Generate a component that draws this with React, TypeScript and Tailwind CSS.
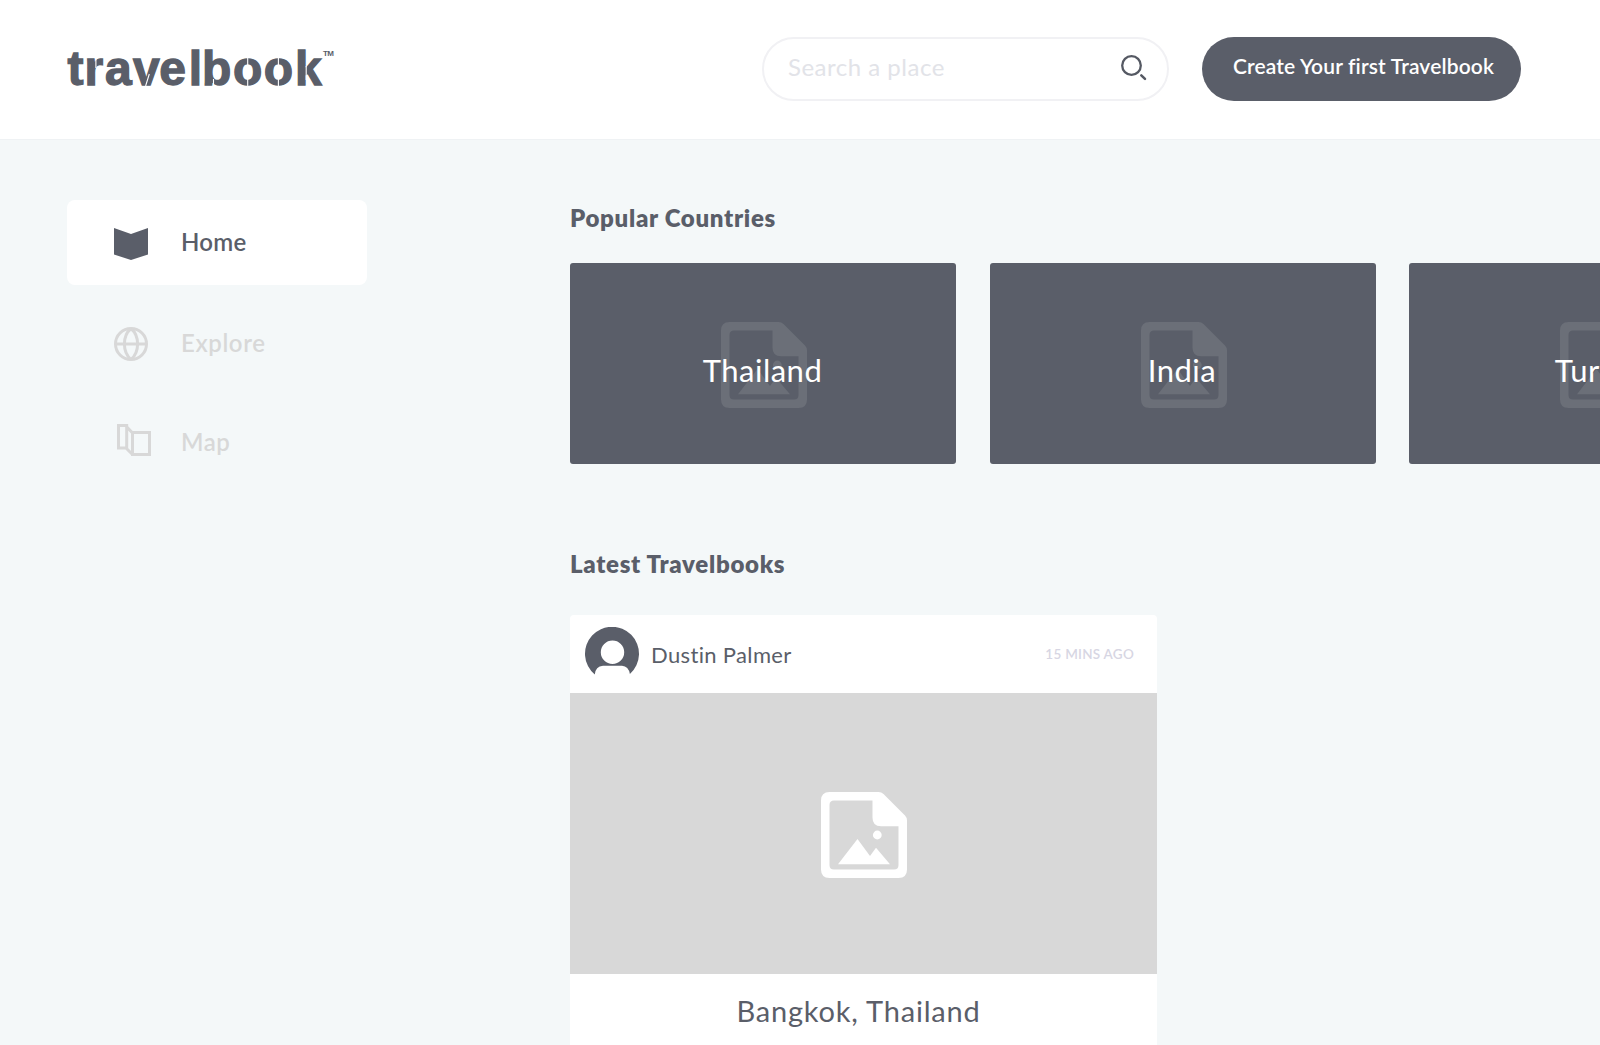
import type { ReactNode } from "react";

function Logo() {
  return (
    <svg width="280" height="44" viewBox="0 0 280 44" className="block overflow-visible" aria-label="travelbook">
      <g fill="#5a5e69" fontFamily="Liberation Sans" fontWeight="700">
        <text x="0.5 17.5 38 66 92.300 121.800 135 166 196.700 228" y="39" fontSize="48" stroke="#5a5e69" strokeWidth="1.300">
          travelbook
        </text>
        <text x="256" y="10" fontSize="8" textLength="11">TM</text>
      </g>
      <g stroke="#fff" strokeWidth="1.100" fill="none">
        <path d="M180.700 9v11.500M180.700 33v9M211.400 9v11.500M211.400 33v9M146.500 33v9M28.900 11v11M78.600 40l3.700-12M239.200 20v14" />
      </g>
    </svg>
  );
}

function SearchIcon() {
  return (
    <svg width="28" height="28" viewBox="0 0 28 28" fill="none" stroke="#555963" className="mb-[2px]">
      <circle cx="11.500" cy="11.500" r="9.300" strokeWidth="2.300" />
      <path d="m21.300 21.300 3.700 3.600" strokeWidth="2.500" strokeLinecap="round" />
    </svg>
  );
}

function ImageIcon({ className }: { className: string }) {
  return (
    <svg width="86" height="86" viewBox="0 0 86 86" fill="currentColor" className={className}>
      <path
        fillRule="evenodd"
        d="M8 0H57.500Q60.500 0 62.500 2L84 23.500Q86 25.500 86 28.500V77.500Q86 86 77.500 86H8.500Q0 86 0 77.500V8.500Q0 0 8.500 0ZM13 8.500Q8.500 8.500 8.500 13V73Q8.500 77.500 13 77.500H73Q77.500 77.500 77.500 73V34.300H60Q51.500 34.300 51.500 25.800V8.500Z"
      />
      <circle cx="56.300" cy="43" r="4.400" />
      <path d="M17 72.300 36.500 47 49 64l6-8.200L69 72.300Z" />
    </svg>
  );
}

function BookIcon() {
  return (
    <svg width="34" height="34" viewBox="0 0 34 34">
      <path d="M0 2 17 8 34 2v26.500L17 34 0 28.500Z" fill="#5a5e69" />
    </svg>
  );
}

function GlobeIcon() {
  return (
    <svg width="34" height="34" viewBox="0 0 34 34" fill="none" stroke="#d8d8d8" strokeWidth="3">
      <circle cx="17" cy="17" r="15.500" />
      <path d="M1.500 17h31M17 1.500C8.200 9 8.200 25 17 32.500M17 1.500C25.800 9 25.800 25 17 32.500" />
    </svg>
  );
}

function MapIcon() {
  return (
    <svg width="34" height="32" viewBox="0 0 34 32" fill="none" stroke="#d8d8d8" strokeWidth="3">
      <path d="M15.500 8.500h17v22h-17zM1.500 1.500h8.200v22.500H1.500zM8.500 1.500l7 7.500M8.500 23.500l7 7" />
    </svg>
  );
}

function Avatar() {
  return (
    <svg width="54" height="54" viewBox="0 0 54 54">
      <path
        fillRule="evenodd"
        fill="#5a5e69"
        d="M9.800 47.600A27 27 0 1 1 44.900 47Q43.500 39 37 38.700H18Q10.500 39 9.800 47.600ZM27.500 13.500a11.700 11.700 0 1 0 0 23.400 11.700 11.700 0 0 0 0-23.400Z"
      />
    </svg>
  );
}

function NavItem({ icon, active, className, children }: { icon: ReactNode; active?: boolean; className: string; children: ReactNode }) {
  return (
    <a className={`flex w-[300px] items-center rounded-lg pl-[47px] text-2xl font-semibold ${active ? "bg-white text-[#5a5e69]" : "text-[#d8d8d8]"} ${className}`}>
      <span className="flex w-[67px] shrink-0">{icon}</span>
      <span className="mb-[2px]">{children}</span>
    </a>
  );
}

function Country({ children }: { children: ReactNode }) {
  return (
    <div className="relative flex h-[201px] w-[386px] shrink-0 items-center justify-center rounded-[3px] bg-[#5a5e69]">
      <ImageIcon className="absolute top-[59px] left-[151px] text-[#6b6f78]" />
      <span className="relative mt-[12px] mr-[1px] text-[31px] leading-[38px] tracking-[0.5px] text-white">{children}</span>
    </div>
  );
}

export default function App() {
  return (
    <div className="flex h-[1045px] w-full flex-col overflow-hidden bg-[#f4f8f9] text-[#5a5e69] [font-family:Lato,sans-serif]">
      <header className="flex h-[140px] shrink-0 items-start border-b border-[#eff2f4] bg-white pt-[37px] pl-[67px]">
        <div className="mt-[9px] w-[695px]">
          <Logo />
        </div>
        <div className="flex h-[64px] w-[407px] items-center justify-between rounded-full border-2 border-[#f1f1f4] pr-[19px] pl-[24px]">
          <span className="mb-[4px] text-2xl tracking-[0.5px] text-[#e2e3e8]">Search a place</span>
          <SearchIcon />
        </div>
        <button className="ml-[33px] h-[64px] w-[319px] rounded-full bg-[#5a5e69] pb-[6px] pl-[4px] text-[21px] font-semibold tracking-[0.15px] text-white">
          Create Your first Travelbook
        </button>
      </header>
      <div className="flex min-h-0 grow">
        <nav className="flex w-[570px] shrink-0 flex-col pt-[60px] pl-[67px]">
          <NavItem active className="h-[85px] tracking-[0.3px]" icon={<BookIcon />}>Home</NavItem>
          <NavItem className="mt-[16px] h-[85px] tracking-[0.6px]" icon={<GlobeIcon />}>Explore</NavItem>
          <NavItem className="mt-[14px] h-[85px] tracking-[0.5px]" icon={<span className="mb-[5px] ml-[3px]"><MapIcon /></span>}>Map</NavItem>
        </nav>
        <main className="flex min-w-0 grow flex-col overflow-hidden">
          <h2 className="mt-[62px] h-[61px] shrink-0 text-2xl leading-8 font-extrabold tracking-[0.7px]">Popular Countries</h2>
          <div className="flex shrink-0 gap-[33.500px]">
            <Country>Thailand</Country>
            <Country>India</Country>
            <Country>Turkey</Country>
          </div>
          <h2 className="mt-[84px] h-[67px] shrink-0 text-2xl leading-8 font-extrabold tracking-[0.7px]">Latest Travelbooks</h2>
          <article className="flex w-[587px] shrink-0 flex-col rounded-t bg-white">
            <div className="flex h-[78px] items-center pr-[23px] pl-[15px]">
              <Avatar />
              <span className="ml-[12px] grow text-[22px] tracking-[0.35px]">Dustin Palmer</span>
              <span className="mt-px text-[13.500px] font-semibold tracking-[0.25px] text-[#d7d6e3]">15 MINS AGO</span>
            </div>
            <div className="flex h-[281px] items-center justify-center bg-[#d8d8d8] pt-[2px] pl-[1px]">
              <ImageIcon className="text-white" />
            </div>
            <div className="h-[90px] pt-[19px] pr-[10px] text-center text-[29px] leading-9 tracking-[0.8px]">Bangkok, Thailand</div>
          </article>
        </main>
      </div>
    </div>
  );
}
